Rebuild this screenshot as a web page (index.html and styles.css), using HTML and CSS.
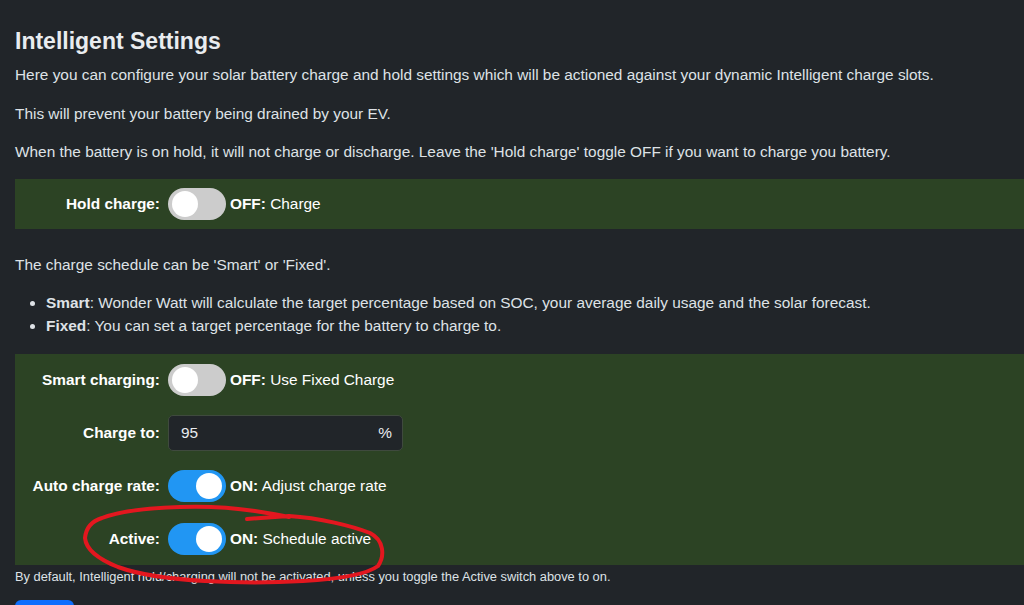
FILE: index.html
```html
<!DOCTYPE html>
<html lang="en">

<head>
    <meta charset="UTF-8">
    <meta name="viewport" content="width=device-width, initial-scale=1.0">
    <title>Intelligent Settings</title>
    <link rel="stylesheet" href="styles.css">
</head>

<body>
    <div class="page">
        <h3>Intelligent Settings</h3>
        <p>Here you can configure your solar battery charge and hold settings which will be actioned against your dynamic Intelligent charge slots.</p>
        <p>This will prevent your battery being drained by your EV.</p>
        <p>When the battery is on hold, it will not charge or discharge. Leave the 'Hold charge' toggle OFF if you want to charge you battery.</p>

        <div class="panel single">
            <div class="row">
                <label class="label">Hold charge:</label>
                <span class="switch"><span class="knob"></span></span>
                <span class="state"><b>OFF:</b> Charge</span>
            </div>
        </div>

        <p class="after_panel">The charge schedule can be 'Smart' or 'Fixed'.</p>
        <ul>
            <li><b>Smart</b>: Wonder Watt will calculate the target percentage based on SOC, your average daily usage and the solar forecast.</li>
            <li><b>Fixed</b>: You can set a target percentage for the battery to charge to.</li>
        </ul>

        <div class="panel">
            <div class="row">
                <label class="label">Smart charging:</label>
                <span class="switch"><span class="knob"></span></span>
                <span class="state"><b>OFF:</b> Use Fixed Charge</span>
            </div>
            <div class="row">
                <label class="label">Charge to:</label>
                <div class="input_group">
                    <span class="value">95</span>
                    <span class="unit">%</span>
                </div>
            </div>
            <div class="row">
                <label class="label">Auto charge rate:</label>
                <span class="switch on"><span class="knob"></span></span>
                <span class="state"><b>ON:</b> Adjust charge rate</span>
            </div>
            <div class="row">
                <label class="label">Active:</label>
                <span class="switch on"><span class="knob"></span></span>
                <span class="state"><b>ON:</b> Schedule active</span>
            </div>
        </div>
        <p class="note">By default, Intelligent hold/charging will not be activated, unless you toggle the Active switch above to on.</p>
        <button class="save">Save</button>
    </div>

    <!-- hand drawn red ring round the Active row -->
    <svg class="ring" width="1024" height="605" viewBox="0 0 1024 605">
        <path d="M247 519 L289 516 C320 518 352 526 370 533 C384 540 385 556 378 566 C366 575 340 579 303 581 C270 583 240 583 205 581 C170 579 140 575 118 567 C98 559 86 549 85 538 C86 528 92 521 102 518 C120 511 150 508 180 507 C210 506 235 508 255 511 C268 513 280 515 289 517"
            fill="none" stroke="#e3171f" stroke-width="4" stroke-linecap="round" stroke-linejoin="round" />
    </svg>
</body>

</html>
```

FILE: styles.css
```css
* {
    margin: 0;
    padding: 0;
    box-sizing: border-box;
}

body {
    background-color: #212529;
    color: #dee2e6;
    font-family: "Liberation Sans", Arial, sans-serif;
    font-size: 15.4px;
    line-height: 1.5;
    overflow: hidden;
}

.page {
    padding: 28px 0 0 15px;
}

h3 {
    font-size: 23px;
    font-weight: bold;
    line-height: 1.2;
    margin-bottom: 7.5px;
    color: #e9ecef;
}

p {
    margin-bottom: 15.4px;
}

.panel {
    background-color: #2c4324;
    padding: 9px 0;
    display: flex;
    flex-direction: column;
    gap: 19px;
}

.panel.single {
    padding: 8px 0;
}

.row {
    display: flex;
    align-items: center;
    height: 34px;
}

.label {
    width: 153px;
    text-align: right;
    padding-right: 8px;
    font-weight: bold;
    color: #fff;
}

.switch {
    position: relative;
    width: 58px;
    height: 32px;
    border-radius: 16px;
    background-color: #ccc;
    flex-shrink: 0;
}

.switch .knob {
    position: absolute;
    top: 3px;
    left: 4px;
    width: 26px;
    height: 26px;
    border-radius: 50%;
    background-color: #fff;
}

.switch.on {
    background-color: #2196f3;
}

.switch.on .knob {
    left: 28px;
}

.state {
    margin-left: 4px;
    color: #fff;
}

.after_panel {
    margin-top: 24px;
}

ul {
    padding-left: 31px;
    margin-bottom: 16.3px;
}

.input_group {
    display: flex;
    justify-content: space-between;
    align-items: center;
    width: 235px;
    height: 36px;
    padding: 0 10px 0 12px;
    background-color: #212529;
    border: 1px solid #3f4a3e;
    border-radius: 5px;
    color: #e9ecef;
}

.note {
    font-size: 12.85px;
    margin: 0;
    padding-top: 2px;
    margin-bottom: 14px;
}

.save {
    width: 59px;
    height: 40px;
    padding-top: 14px;
    border: none;
    border-radius: 6px;
    background-color: #0d6efd;
    color: #fff;
    font-family: "Liberation Sans", Arial, sans-serif;
    font-size: 15.4px;
}

.ring {
    position: absolute;
    top: 0;
    left: 0;
    pointer-events: none;
}
```
